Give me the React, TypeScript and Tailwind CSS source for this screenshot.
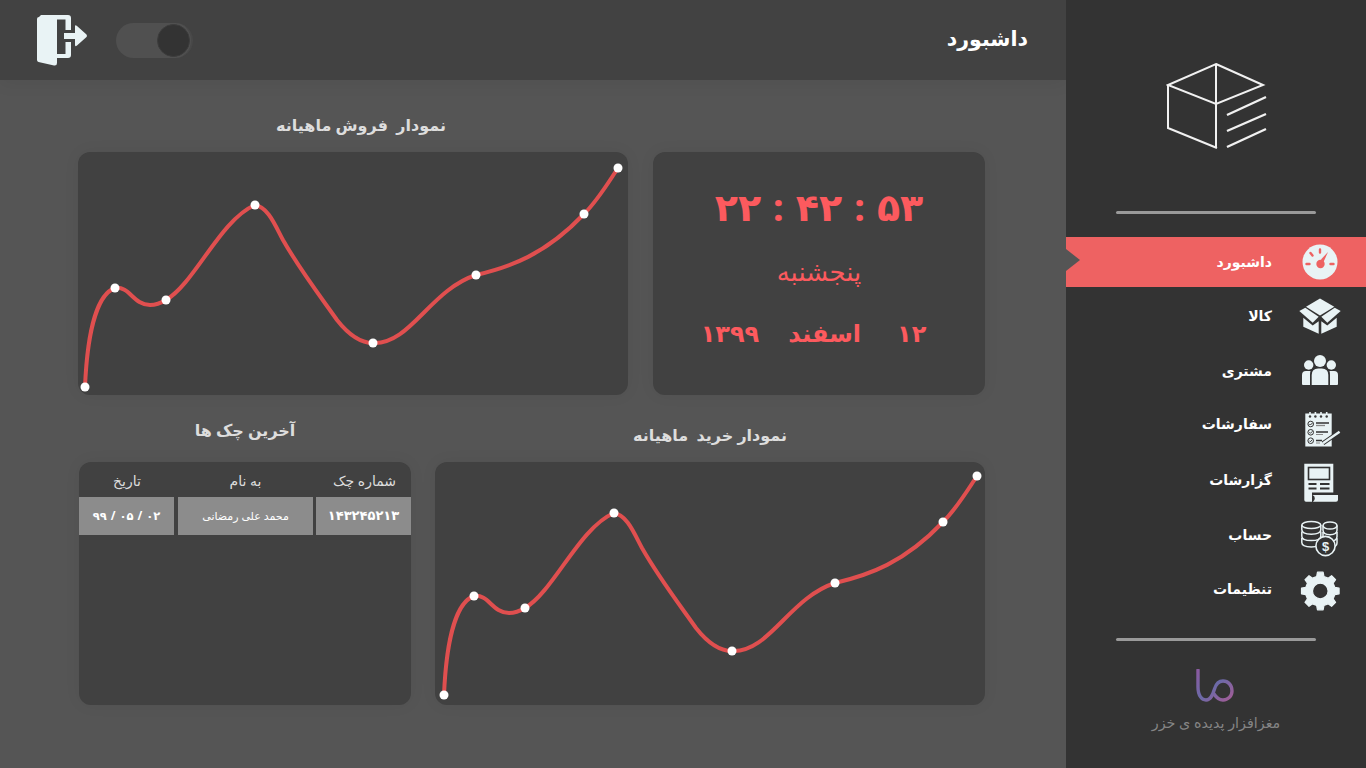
import React from "react";

const INK = "#e9f3f5";
const BG = "#333333";

function Curve({ dx, dy }: { dx: number; dy: number }) {
  const pts: [number, number][] = [[7,235],[37,136],[88,148],[177,53],[295,191],[398,123],[506,62],[540,16]];
  return (
    <svg width="550" height="243" viewBox="0 0 550 243" className="block">
      <g transform={`translate(${dx} ${dy})`}>
        <path
          d="M7 235 C9 188 17 143 37 136 C52 134 55 153 72 153 C78 153 83 151 88 148 C117 131 142 68 177 53 C190 55 197 73 205 88 C222 118 245 148 259 168 C270 182 281 191 295 191 C332 193 352 138 398 123 C432 115 467 103 506 62 C520 48 530 31 540 16"
          fill="none" stroke="#e04f4f" strokeWidth="4" strokeLinecap="round"
        />
        {pts.map(([x, y]) => (
          <circle key={x} cx={x} cy={y} r="4.5" fill="#ffffff" />
        ))}
      </g>
    </svg>
  );
}

function Gauge() {
  return (
    <svg width="50" height="50" viewBox="0 0 50 50">
      <circle cx="25" cy="25" r="17.5" fill={INK} />
      <path d="M25 12.5v3M15.5 16l2 2.5M11.5 27h3M35.5 27h3" stroke="#ee6262" strokeWidth="2.4" strokeLinecap="round" />
      <path d="M33 15 L26 22.5 L28.5 25 Z" fill="#ee6262" />
      <circle cx="25.5" cy="27" r="4.2" fill="#ee6262" />
    </svg>
  );
}
function BoxIcon() {
  return (
    <svg width="50" height="50" viewBox="0 0 50 50" fill={INK}>
      <polygon points="25,7.5 39.3,15.8 25,24.5 11,15.8" />
      <polygon points="4.3,20 10.3,16.8 23.7,25.8 17.7,31.8" />
      <polygon points="45.7,20 39.7,16.8 26.3,25.8 32.3,31.8" />
      <polygon points="8.3,26.8 17.7,34.5 23.7,30.2 23.7,42.8 8.3,35.8" />
      <polygon points="41.7,26.8 32.3,34.5 26.3,30.2 26.3,42.8 41.7,35.8" />
    </svg>
  );
}
function People() {
  return (
    <svg width="50" height="50" viewBox="0 0 50 50" fill={INK}>
      <circle cx="25" cy="15" r="6" />
      <circle cx="13.7" cy="19" r="4.7" />
      <circle cx="36.3" cy="19" r="4.7" />
      <path d="M16.7 39V29q0-6.5 6.5-6.5h3.6q6.5 0 6.5 6.5v10z" />
      <path d="M7 39V29q0-4 4-4h4.5q-.5 1.5-.5 4v10H8q-1 0-1-1z" />
      <path d="M43 39V29q0-4-4-4h-4.5q.5 1.5.5 4v10h7q1 0 1-1z" />
    </svg>
  );
}
function Checklist() {
  return (
    <svg width="50" height="50" viewBox="0 0 50 50">
      <rect x="10.3" y="12.5" width="26.4" height="33" fill={INK} />
      <path d="M15 11v5M20.4 11v5M26 11v5M31.7 11v5" stroke={INK} strokeWidth="1.6" />
      <g fill="#3a3a3a">
        <circle cx="15" cy="15.5" r="1.2" /><circle cx="20.4" cy="15.5" r="1.2" /><circle cx="26" cy="15.5" r="1.2" /><circle cx="31.7" cy="15.5" r="1.2" />
      </g>
      <g fill="none" stroke="#333" strokeWidth="1">
        <circle cx="15.7" cy="23" r="2.8" /><circle cx="15.7" cy="31.3" r="2.8" /><circle cx="15.7" cy="39.7" r="2.8" />
        <path d="M14.4 23l1 1 2-2M14.4 31.3l1 1 2-2M14.4 39.7l1 1 2-2" />
      </g>
      <path d="M21 22h13M21 31h12M21 39.5h6" stroke="#333" strokeWidth="1.3" />
      <path d="M21 24.5h9" stroke="#888" strokeWidth="1.3" />
      <path d="M21 33.5h7M21 42h4" stroke="#888" strokeWidth="1" />
      <path d="M28 42.3 L44.6 30.8" stroke={BG} strokeWidth="4.4" />
      <path d="M28 42.3 L44.6 30.8" stroke={INK} strokeWidth="2.4" />
    </svg>
  );
}
function Report() {
  return (
    <svg width="50" height="50" viewBox="0 0 50 50">
      <path d="M9.3 6.7H38.3V35.5H17V44.7H11q-1.7 0-1.7-1.7z" fill={INK} />
      <path d="M17.5 38H43v4.7q0 2-2 2H18q1.8-1 1.8-3.4t-2.3-3.3z" fill={INK} />
      <rect x="13.5" y="10.5" width="21" height="12" fill="none" stroke="#333" strokeWidth="1.6" />
      <rect x="17" y="14" width="14" height="5" fill={INK} />
      <g stroke="#333" strokeWidth="2">
        <path d="M13.5 27h8M25 27h9.5M13.5 31.5h8M25 31.5h9.5" />
      </g>
    </svg>
  );
}
function Stack({ x, w, top, n }: { x: number; w: number; top: number; n: number }) {
  const rx = w / 2;
  const items = [];
  for (let i = 0; i < n; i++) {
    const y = top + i * 6.4;
    items.push(
      <path key={i} d={`M${x} ${y}v4.8c0 3 ${w * 0.22} 4.4 ${rx} 4.4s${rx} -1.4 ${rx} -4.4v-4.8`} />
    );
  }
  return (
    <g fill="none" stroke={INK} strokeWidth="1.5">
      <ellipse cx={x + rx} cy={top} rx={rx} ry="3.6" />
      {items}
    </g>
  );
}
function Coins() {
  return (
    <svg width="50" height="50" viewBox="0 0 50 50">
      <Stack x={28} w={14} top={13.5} n={3} />
      <Stack x={6.8} w={19} top={13} n={3} />
      <circle cx="30.5" cy="34" r="9.6" fill={BG} stroke={INK} strokeWidth="1.6" />
      <text x="30.5" y="38.6" textAnchor="middle" fontSize="13" fontWeight="700" fill={INK} fontFamily="Liberation Sans, sans-serif">$</text>
    </svg>
  );
}
function gearPath() {
  const cx = 25.3, cy = 25, n = 8;
  const out: string[] = [];
  for (let i = 0; i < n; i++) {
    const a = (i * 2 * Math.PI) / n - Math.PI / 2;
    const seg = (2 * Math.PI) / n;
    const p = (r: number, t: number) => `${(cx + r * Math.cos(a + t)).toFixed(2)} ${(cy + r * Math.sin(a + t)).toFixed(2)}`;
    out.push(`${i === 0 ? "M" : "L"}${p(15, -seg * 0.31)}`, `L${p(19, -seg * 0.19)}`, `L${p(19, seg * 0.19)}`, `L${p(15, seg * 0.31)}`);
  }
  return out.join(" ") + " Z M33.1 25 A7.8 7.8 0 1 0 17.5 25 A7.8 7.8 0 1 0 33.1 25 Z";
}
function Gear() {
  return (
    <svg width="50" height="50" viewBox="0 0 50 50">
      <path d={gearPath()} fill={INK} fillRule="evenodd" stroke={INK} strokeWidth="1.2" strokeLinejoin="round" />
    </svg>
  );
}

const items: { label: string; Icon: React.FC; h: string; nudge: string }[] = [
  { label: "کالا", Icon: BoxIcon, h: "h-[57px]", nudge: "mb-[0px]" },
  { label: "مشتری", Icon: People, h: "h-[54px]", nudge: "mb-[2px]" },
  { label: "سفارشات", Icon: Checklist, h: "h-[56px]", nudge: "mb-[5px]" },
  { label: "گزارشات", Icon: Report, h: "h-[55px]", nudge: "mb-[4px]" },
  { label: "حساب", Icon: Coins, h: "h-[55px]", nudge: "mb-[4px]" },
  { label: "تنظیمات", Icon: Gear, h: "h-[54px]", nudge: "mb-[6px]" },
];

const FONT = "font-['Noto_Sans','DejaVu_Sans',sans-serif]";

function Title({ children, className }: { children: React.ReactNode; className: string }) {
  return (
    <div dir="rtl" className={`h-[30px] leading-[30px] text-center text-[16px] font-bold text-[#dddddd] ${className}`}>
      {children}
    </div>
  );
}

export default function App() {
  return (
    <div className={`flex w-[1366px] h-[768px] overflow-hidden bg-[#555555] ${FONT}`}>
      <main className="w-[1066px] h-full flex flex-col">
        <header className="h-20 bg-[#424242] flex items-center justify-between pl-[35px] pr-[38px] shadow-[0_4px_16px_rgba(0,0,0,0.06)]">
          <div className="flex items-center gap-[26px]">
            <svg width="55" height="52" viewBox="0 0 55 52">
              <path d="M4 3Q2 3 2 5V46Q2 47.5 3.5 48L19 51.5Q22 52 22 49V3Q22 1 20 1H6Z" fill={INK} />
              <path d="M18 1H33Q36 1 36 4V16H30.5V5.5H18ZM18 40H30.5V28H36V41Q36 44 33 44H18Z" fill={INK} />
              <path d="M29 19H40V12.5Q40 10.5 42 12L51.5 20.5Q52.5 22 51.5 23L42 31.5Q40 33 40 31V25H29Z" fill={INK} />
            </svg>
            <div className="w-[77px] h-[35px] rounded-full bg-[#505050] border-r-2 border-[#484848] flex items-center justify-end pr-[1px]">
              <div className="w-[33px] h-[33px] rounded-full bg-[#333333] border border-[#3c3c3c]" />
            </div>
          </div>
          <h1 dir="rtl" className="text-[20.5px] font-bold text-white mb-1">داشبورد</h1>
        </header>

        <div className="pl-[78px] pt-[30px] flex flex-col">
          <div className="flex gap-[25px]">
            <section className="w-[550px] flex flex-col">
              <Title className="pl-4 mb-3">نمودار&nbsp; فروش ماهیانه</Title>
              <div className="h-[243px] rounded-xl bg-[#414141] shadow-[0_0_16px_rgba(0,0,0,0.06)] overflow-hidden">
                <Curve dx={0} dy={0} />
              </div>
            </section>
            <section className="w-[332px] mt-[42px] h-[243px] rounded-xl bg-[#414141] shadow-[0_0_16px_rgba(0,0,0,0.06)] flex flex-col items-center text-[#fc5a5e]">
              <div dir="ltr" className="mt-[24px] h-[60px] leading-[60px] text-[38px] font-bold flex gap-[12px]">
                <span>۲۲</span><span>:</span><span>۴۲</span><span>:</span><span>۵۳</span>
              </div>
              <div dir="rtl" className="mt-[17px] h-[36px] leading-[36px] text-[26px]">پنجشنبه</div>
              <div dir="ltr" className="mt-[24px] h-[40px] leading-[40px] text-[24px] font-bold flex gap-[29px] mr-[11px]">
                <span>۱۳۹۹</span><span dir="rtl">اسفند</span><span className="ml-[7px]">۱۲</span>
              </div>
            </section>
          </div>

          <div className="flex gap-[24px] mt-5 ml-px">
            <section className="w-[332px] flex flex-col">
              <Title className="mb-[17px]">آخرین چک ها</Title>
              <div className="h-[243px] rounded-xl bg-[#414141] shadow-[0_0_16px_rgba(0,0,0,0.06)] overflow-hidden">
                <div dir="rtl" className="flex h-[35px] items-center pt-[2px] text-[14px] text-[#dddddd] text-center">
                  <div className="w-[95px] pl-[2px]">شماره چک</div>
                  <div className="w-[135px] ml-[3px] mr-[3px]">به نام</div>
                  <div className="w-[95px] pr-[1px]">تاریخ</div>
                </div>
                <div dir="rtl" className="flex h-[38px] text-center text-white">
                  <div className="w-[95px] bg-[#8c8c8c] flex items-center justify-center text-[13px] font-bold">۱۴۳۲۴۵۲۱۳</div>
                  <div className="w-[135px] ml-[4px] mr-[3px] bg-[#8c8c8c] flex items-center justify-center text-[11px]">محمد علی رمضانی</div>
                  <div dir="ltr" className="w-[95px] bg-[#8c8c8c] flex items-center justify-center text-[11.5px] font-bold gap-[4px]">
                    <span>۹۹</span><span>/</span><span>۰۵</span><span>/</span><span>۰۲</span>
                  </div>
                </div>
              </div>
            </section>
            <section className="w-[550px] flex flex-col">
              <Title className="mt-[5px] mb-3">نمودار خرید&nbsp; ماهیانه</Title>
              <div className="h-[243px] rounded-xl bg-[#414141] shadow-[0_0_16px_rgba(0,0,0,0.06)] overflow-hidden">
                <Curve dx={2} dy={-2} />
              </div>
            </section>
          </div>
        </div>
      </main>

      <aside className="w-[300px] h-full bg-[#333333] flex flex-col">
        <div className="h-[211px] flex justify-center items-start pt-[62px]">
          <svg width="104" height="90" viewBox="0 0 104 90" className="ml-[4px]" fill="none" stroke="#f1f1f1" strokeWidth="2">
            <path d="M50 2 L97 23 L50 42 L2 23 Z M2 23 V66 L51 86 M50 2 V86" />
            <path d="M61 53 L100 35 M61 69 L100 52 M61 85 L100 67" strokeWidth="2.4" />
          </svg>
        </div>
        <div className="mx-[50px] h-[3px] rounded-full bg-[#9a9a9a]" />
        <nav className="mt-[23px] flex flex-col">
          <div className="relative h-[50px] bg-[#ee6262] flex items-center justify-end">
            <div className="absolute left-0 top-[12px] w-0 h-0 border-y-[11.5px] border-y-transparent border-l-[14px] border-l-[#555555]" />
            <span dir="rtl" className="text-[14px] font-bold text-white mr-[23px] mb-[2px]">داشبورد</span>
            <span className="mr-[21px]"><Gauge /></span>
          </div>
          {items.map(({ label, Icon, h, nudge }) => (
            <div key={label} className={`${h} flex items-center justify-end`}>
              <span dir="rtl" className={`text-[14px] font-bold text-white mr-[23px] ${nudge}`}>{label}</span>
              <span className="mr-[21px]"><Icon /></span>
            </div>
          ))}
        </nav>
        <div className="mt-[20px] mx-[50px] h-[3px] rounded-full bg-[#9a9a9a]" />
        <div className="flex flex-col items-center mt-[28px]">
          <svg width="40" height="34" viewBox="0 0 40 34" fill="none">
            <defs>
              <linearGradient id="lg" x1="0" y1="0" x2="1" y2="1">
                <stop offset="0" stopColor="#8a5aa0" />
                <stop offset="0.5" stopColor="#6b6aa8" />
                <stop offset="1" stopColor="#a35c96" />
              </linearGradient>
            </defs>
            <path d="M2 1V18C2 27 6 31 10 31C15 31 17 25 18.5 20C20 15 23 12 27 12C32 12 36 16 36 22C36 27 32 31 27 31C23 31 20 28 18 25" stroke="url(#lg)" strokeWidth="3.4" strokeLinecap="round" />
          </svg>
          <div dir="rtl" className="mt-[9px] text-[14.3px] text-[#858585]">مغزافزار پدیده ی خزر</div>
        </div>
      </aside>
    </div>
  );
}
